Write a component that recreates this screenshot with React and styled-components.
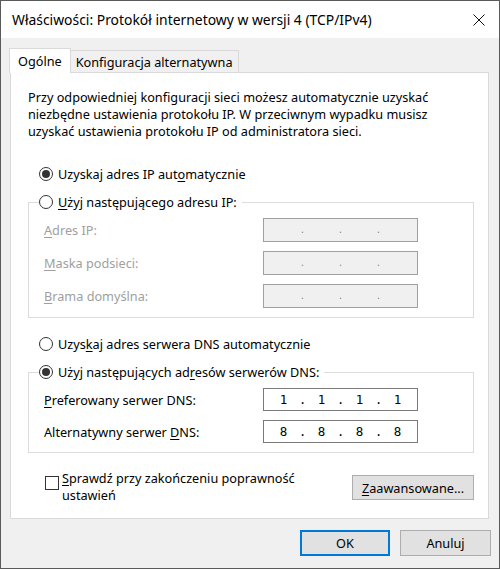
import React from 'react';
import styled, { createGlobalStyle } from 'styled-components';

const Global = createGlobalStyle`
  html, body {
    margin: 0;
    padding: 0;
    background: #ffffff;
  }
  * { box-sizing: border-box; }
`;

const Window = styled.div`
  width: 500px;
  height: 569px;
  display: flex;
  flex-direction: column;
  border: 1px solid #5a5a5a;
  background: #f0f0f0;
  font-family: "Noto Sans", "Open Sans", sans-serif;
  font-size: 12.7px;
  color: #000;
`;

const TitleBar = styled.div`
  height: 37px;
  flex: none;
  display: flex;
  align-items: center;
  justify-content: space-between;
  background: #fff;
  padding: 0 14px 0 11px;
  font-size: 13.9px;
`;

const Body = styled.div`
  flex: 1;
  display: flex;
  flex-direction: column;
  padding: 10px 10px 0 8px;
`;

const TabRow = styled.div`
  display: flex;
  align-items: flex-end;
  height: 25px;
  position: relative;
  z-index: 1;
  margin-bottom: -1px;
`;

const Tab = styled.div`
  height: ${p => (p.$active ? '25px' : '23px')};
  padding: 0 ${p => (p.$active ? '8px' : '5px')};
  display: flex;
  align-items: center;
  border: 1px solid #d9d9d9;
  border-bottom: ${p => (p.$active ? 'none' : '1px solid #d9d9d9')};
  border-left: ${p => (p.$active ? '1px solid #d9d9d9' : 'none')};
  background: ${p => (p.$active ? '#fff' : '#f0f0f0')};
`;

const Panel = styled.div`
  background: #fff;
  border: 1px solid #d9d9d9;
  margin-left: 1px;
  padding: 16px 14px 14px 17px;
  display: flex;
  flex-direction: column;
`;

const Desc = styled.p`
  margin: 0;
  line-height: 17px;
  white-space: nowrap;
`;

const OptionRow = styled.div`
  display: flex;
  align-items: center;
  height: 16px;
  padding-left: 11px;
  margin-top: ${p => p.$top || 0}px;
`;

const RadioDot = styled.span`
  width: 14px;
  height: 14px;
  flex: none;
  border-radius: 50%;
  border: 1px solid #333;
  display: flex;
  align-items: center;
  justify-content: center;
  margin-right: 5px;
  &::after {
    content: '';
    width: 8px;
    height: 8px;
    border-radius: 50%;
    background: #333;
    display: ${p => (p.$checked ? 'block' : 'none')};
  }
`;

const Group = styled.fieldset`
  margin: ${p => p.$top || 0}px 0 0 0;
  border: 1px solid #dcdcdc;
  padding: 8px 14px 9px 15px;
  min-width: 0;
  display: grid;
  grid-template-columns: 219px 155px;
  row-gap: ${p => p.$gap || 8}px;
`;

const Legend = styled.legend`
  margin-left: -5px;
  padding: 0 5px 0 0;
  display: flex;
  align-items: center;
  height: 16px;
`;

const FieldLabel = styled.label`
  display: flex;
  align-items: center;
  color: ${p => (p.$disabled ? '#a0a0a0' : '#000')};
`;

const IpBox = styled.div`
  height: ${p => p.$h || 24}px;
  border: 1px solid ${p => (p.$disabled ? '#a0a0a0' : '#7a7a7a')};
  background: ${p => (p.$disabled ? '#f0f0f0' : '#fff')};
  display: grid;
  grid-template-columns: 31px 7px 31px 7px 31px 7px 31px;
  align-items: center;
  padding-left: 4px;
  font-family: "DejaVu Sans Mono", "Liberation Mono", monospace;
  font-size: 12.5px;
`;

const Octet = styled.span`
  text-align: center;
`;

const Dot = styled.span`
  text-align: center;
  color: ${p => (p.$disabled ? '#8a8a8a' : '#000')};
  font-size: ${p => (p.$disabled ? '9px' : '12px')};
`;

const BottomRow = styled.div`
  display: flex;
  justify-content: space-between;
  align-items: flex-start;
  margin-top: 17px;
`;

const CheckWrap = styled.label`
  display: flex;
  align-items: flex-start;
  padding-left: 17px;
  line-height: 17px;
`;

const CheckBox = styled.span`
  width: 14px;
  height: 14px;
  flex: none;
  border: 1px solid #333;
  background: #fff;
  margin: 6px 3px 0 0;
`;

const Button = styled.button`
  font-family: inherit;
  font-size: 12.7px;
  color: #000;
  height: ${p => p.$h || 25}px;
  width: ${p => p.$w || 90}px;
  margin-top: ${p => p.$top || 0}px;
  background: #e1e1e1;
  border: ${p => (p.$default ? '2px solid #0078d7' : '1px solid #adadad')};
  padding: 0;
`;

const Footer = styled.div`
  display: flex;
  justify-content: flex-end;
  gap: 10px;
  padding: 11px 8px 0 0;
  margin-right: -10px;
`;

const U = styled.u`
  text-decoration-thickness: 1px;
  text-underline-offset: 2px;
`;

function CloseIcon() {
  return (
    <svg width="12" height="12" viewBox="0 0 12 12">
      <path d="M0.5 0.5 L11.5 11.5 M11.5 0.5 L0.5 11.5" stroke="#111" strokeWidth="1" fill="none" />
    </svg>
  );
}

function Ip({ values, disabled, h }) {
  const parts = values || ['', '', '', ''];
  return (
    <IpBox $disabled={disabled} $h={h}>
      <Octet>{parts[0]}</Octet>
      <Dot $disabled={disabled}>.</Dot>
      <Octet>{parts[1]}</Octet>
      <Dot $disabled={disabled}>.</Dot>
      <Octet>{parts[2]}</Octet>
      <Dot $disabled={disabled}>.</Dot>
      <Octet>{parts[3]}</Octet>
    </IpBox>
  );
}

export default function App() {
  return (
    <Window>
      <Global />
      <TitleBar>
        <span>Właściwości: Protokół internetowy w wersji 4 (TCP/IPv4)</span>
        <CloseIcon />
      </TitleBar>
      <Body>
        <TabRow>
          <Tab $active>Ogólne</Tab>
          <Tab>Konfiguracja alternatywna</Tab>
        </TabRow>
        <Panel>
          <Desc>
            Przy odpowiedniej konfiguracji sieci możesz automatycznie uzyskać<br />
            niezbędne ustawienia protokołu IP. W przeciwnym wypadku musisz<br />
            uzyskać ustawienia protokołu IP od administratora sieci.
          </Desc>

          <OptionRow $top={26}>
            <RadioDot $checked />
            <span>Uzyskaj adres IP aut<U>o</U>matycznie</span>
          </OptionRow>

          <Group $top={12} $gap={9}>
            <Legend>
              <RadioDot />
              <span><U>U</U>żyj następującego adresu IP:</span>
            </Legend>
            <FieldLabel $disabled><span><U>A</U>dres IP:</span></FieldLabel>
            <Ip disabled />
            <FieldLabel $disabled><span><U>M</U>aska podsieci:</span></FieldLabel>
            <Ip disabled />
            <FieldLabel $disabled><span><U>B</U>rama domyślna:</span></FieldLabel>
            <Ip disabled />
          </Group>

          <OptionRow $top={18}>
            <RadioDot />
            <span>Uzys<U>k</U>aj adres serwera DNS automatycznie</span>
          </OptionRow>

          <Group $top={12} $gap={9}>
            <Legend>
              <RadioDot $checked />
              <span>Użyj następujących ad<U>r</U>esów serwerów DNS:</span>
            </Legend>
            <FieldLabel><span><U>P</U>referowany serwer DNS:</span></FieldLabel>
            <Ip values={['1', '1', '1', '1']} h={23} />
            <FieldLabel><span>Alternatywny serwer <U>D</U>NS:</span></FieldLabel>
            <Ip values={['8', '8', '8', '8']} h={23} />
          </Group>

          <BottomRow>
            <CheckWrap>
              <CheckBox />
              <span><U>S</U>prawdź przy zakończeniu poprawność<br />ustawień</span>
            </CheckWrap>
            <Button $w={122} $top={5}><U>Z</U>aawansowane...</Button>
          </BottomRow>
        </Panel>
        <Footer>
          <Button $default $h={26}>OK</Button>
          <Button $w={91} $h={26}>Anuluj</Button>
        </Footer>
      </Body>
    </Window>
  );
}
